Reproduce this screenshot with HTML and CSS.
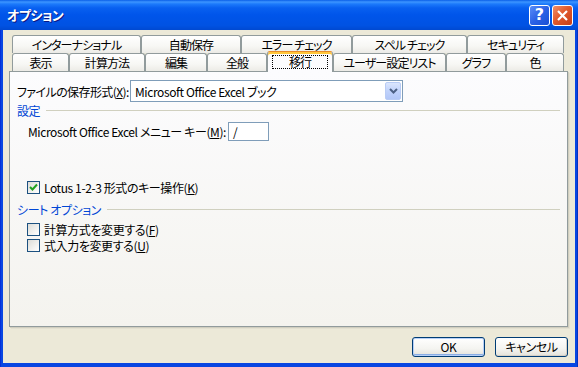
FILE: index.html
```html
<!DOCTYPE html>
<html lang="ja">

<head>
    <meta charset="UTF-8">
    <meta name="viewport" content="width=device-width, initial-scale=1.0">
    <link rel="stylesheet" href="styles.css">
    <title>オプション</title>
</head>

<body>
    <div class="window">
        <div class="titlebar">
            <span class="title">オプション</span>
            <div class="caption">
                <span class="cbtn help">?</span>
                <span class="cbtn close">
                    <svg width="13" height="13" viewBox="0 0 13 13">
                        <path d="M2 2 L11 11 M11 2 L2 11" stroke="#fff" stroke-width="2.2" fill="none" />
                    </svg>
                </span>
            </div>
        </div>

        <div class="frame">
            <div class="tabs">
                <div class="tab-row">
                    <div class="tab w129">インターナショナル</div>
                    <div class="tab w100">自動保存</div>
                    <div class="tab w111">エラー チェック</div>
                    <div class="tab w115">スペル チェック</div>
                    <div class="tab w97">セキュリティ</div>
                </div>
                <div class="tab-row">
                    <div class="tab w57">表示</div>
                    <div class="tab w76">計算方法</div>
                    <div class="tab w62">編集</div>
                    <div class="tab w60">全般</div>
                    <div class="tab w66 active"><span class="focus">移行</span></div>
                    <div class="tab w113">ユーザー設定リスト</div>
                    <div class="tab w60">グラフ</div>
                    <div class="tab w58">色</div>
                </div>
            </div>

            <div class="panel">
                <div class="row format">
                    <label class="format-label">ファイルの保存形式(<u>X</u>):</label>
                    <div class="combo">
                        <span class="combo-text">Microsoft Office Excel ブック</span>
                        <span class="combo-btn">
                            <svg width="9" height="6" viewBox="0 0 9 6">
                                <path d="M1 1 L4.5 4.5 L8 1" stroke="#4d6185" stroke-width="2" fill="none" />
                            </svg>
                        </span>
                    </div>
                </div>

                <div class="group-head first">
                    <span>設定</span>
                    <span class="rule"></span>
                </div>

                <div class="row menu-key">
                    <label class="key-label">Microsoft Office Excel メニュー キー(<u>M</u>):</label>
                    <div class="textbox">/</div>
                </div>

                <div class="check lotus">
                    <span class="box">
                        <svg width="9" height="9" viewBox="0 0 9 9">
                            <path d="M1 4 L3.5 6.5 L8 1.5" stroke="#21a121" stroke-width="2" fill="none" />
                        </svg>
                    </span>
                    <span>Lotus 1-2-3 形式のキー操作(<u>K</u>)</span>
                </div>

                <div class="group-head sheet">
                    <span>シート オプション</span>
                    <span class="rule"></span>
                </div>

                <div class="check">
                    <span class="box"></span>
                    <span>計算方式を変更する(<u>F</u>)</span>
                </div>
                <div class="check">
                    <span class="box"></span>
                    <span>式入力を変更する(<u>U</u>)</span>
                </div>
            </div>

            <div class="buttons">
                <button class="btn default">OK</button>
                <button class="btn">キャンセル</button>
            </div>
        </div>
    </div>
</body>

</html>
```

FILE: styles.css
```css
* {
    margin: 0;
    padding: 0;
    box-sizing: border-box;
}

body {
    font-family: 'Noto Sans CJK JP', sans-serif;
    font-size: 12px;
    font-feature-settings: "palt";
    letter-spacing: -0.4px;
    color: #000;
    background: #fff;
}

u {
    text-decoration: underline;
    text-underline-offset: 1px;
}

.window {
    width: 578px;
    height: 367px;
    display: flex;
    flex-direction: column;
    background: linear-gradient(to right, #0019cf 0, #0846e2 1px, #0846e2 577px, #001ea0 100%);
}

/* title bar */
.titlebar {
    height: 30px;
    display: flex;
    align-items: center;
    justify-content: space-between;
    padding: 0 5px 0 7px;
    background: linear-gradient(to bottom, #0a5fe8 0, #3d95ff 2px, #1c7afb 4px, #0860f0 8px, #0055ea 50%, #0052e3 85%, #0049d1 100%);
}

.title {
    color: #fff;
    font-weight: bold;
    font-size: 13px;
    line-height: 16px;
    letter-spacing: -0.5px;
    text-shadow: 1px 1px #0a1883;
}

.caption {
    display: flex;
    gap: 2px;
}

.cbtn {
    width: 21px;
    height: 21px;
    border: 1px solid #fff;
    border-radius: 3px;
    display: flex;
    align-items: center;
    justify-content: center;
    color: #fff;
}

.help {
    background: linear-gradient(135deg, #5a8ef8 0, #2b62e6 50%, #1a4fd4 100%);
    font-family: 'DejaVu Sans', sans-serif;
    font-weight: bold;
    font-size: 16px;
    line-height: 16px;
    letter-spacing: 0;
}

.close {
    background: linear-gradient(135deg, #f0906a 0, #e1592c 45%, #c83e18 100%);
}

/* dialog body */
.frame {
    flex: 1;
    margin: 0 3px 4px;
    background: #ece9d8;
    display: flex;
    flex-direction: column;
    padding: 5px 7px 6px 6px;
}

.tabs {
    padding-left: 3px;
}

.tab-row {
    display: flex;
    height: 18px;
    align-items: flex-start;
}

.tab {
    height: 18px;
    border: 1px solid #919b9c;
    border-bottom: none;
    border-radius: 3px 3px 0 0;
    background: linear-gradient(to bottom, #fff 0, #f7f7f4 60%, #ecebe6 100%);
    display: flex;
    align-items: center;
    justify-content: center;
    white-space: nowrap;
    line-height: 14px;
    letter-spacing: -0.9px;
}

.tab.active {
    position: relative;
    z-index: 1;
    height: 21px;
    margin-top: -2px;
    border-top: 1px solid #e68b2c;
    box-shadow: inset 0 2px #ffc73c;
    background: #fcfcfe;
    flex-direction: column;
    align-items: stretch;
}

.focus {
    margin: 3px 4px 3px;
    height: 14px;
    border: 1px dotted #000;
    display: flex;
    align-items: center;
    justify-content: center;
}

.w57 { width: 57px; }
.w58 { width: 58px; }
.w60 { width: 60px; }
.w62 { width: 62px; }
.w66 { width: 66px; }
.w76 { width: 76px; }
.w97 { width: 97px; }
.w100 { width: 100px; }
.w111 { width: 111px; }
.w113 { width: 113px; }
.w115 { width: 115px; }
.w129 { width: 129px; }

.panel {
    height: 256px;
    border: 1px solid #919b9c;
    box-shadow: 1px 1px 0 #d0cebf, 2px 2px 0 #e3e0d0;
    background: linear-gradient(to bottom, #fcfcfe 0, #f4f3ee 100%);
    padding: 8px 7px 0 7px;
    display: flex;
    flex-direction: column;
}

.row {
    display: flex;
    align-items: center;
    white-space: nowrap;
}

.format-label {
    width: 113px;
    flex-shrink: 0;
    letter-spacing: -0.6px;
}

.combo {
    width: 273px;
    height: 22px;
    border: 1px solid #7f9db9;
    background: #fff;
    display: flex;
    align-items: center;
    justify-content: space-between;
    padding: 0 1px 0 4px;
}

.combo-btn {
    width: 16px;
    height: 18px;
    border: 1px solid #b9ccf5;
    border-radius: 2px;
    background: linear-gradient(to bottom, #dbe6fd 0, #c1d3fb 50%, #b2c7f7 100%);
    display: flex;
    align-items: center;
    justify-content: center;
}

.group-head {
    display: flex;
    align-items: center;
    gap: 6px;
    height: 14px;
    color: #0046d5;
    white-space: nowrap;
}

.group-head.first {
    margin-top: 1px;
}

.group-head.sheet {
    margin-top: 7px;
}

.rule {
    flex: 1;
    height: 1px;
    background: #d0d0bf;
}

.menu-key {
    margin-top: 5px;
    padding-left: 11px;
}

.key-label {
    width: 200px;
    flex-shrink: 0;
}

.textbox {
    width: 41px;
    height: 19px;
    border: 1px solid #7f9db9;
    background: #fff;
    padding-left: 4px;
    line-height: 17px;
}

.check {
    display: flex;
    align-items: center;
    gap: 4px;
    height: 16px;
    padding-left: 10px;
    white-space: nowrap;
}

.check.lotus {
    margin-top: 38px;
}

.group-head.sheet + .check {
    margin-top: 5px;
}

.box {
    width: 13px;
    height: 13px;
    border: 1px solid #1c5180;
    background: linear-gradient(135deg, #dcdcd7 0, #f2f2ef 60%, #fff 100%);
    display: flex;
    align-items: center;
    justify-content: center;
}

.buttons {
    margin-top: 10px;
    display: flex;
    justify-content: flex-end;
    gap: 10px;
}

.btn {
    width: 73px;
    height: 20px;
    font-family: 'Noto Sans CJK JP', sans-serif;
    font-size: 12px;
    font-feature-settings: "palt";
    letter-spacing: -0.4px;
    border: 1px solid #003c74;
    border-radius: 3px;
    background: linear-gradient(to bottom, #fff 0, #f4f4f0 60%, #e3e2da 100%);
    box-shadow: inset -1px -1px 0 #d6d0c5;
    line-height: 16px;
}

.btn.default {
    box-shadow: inset 0 0 0 1px #b6cff7, inset 0 -2px 0 #89ade4;
}
```
